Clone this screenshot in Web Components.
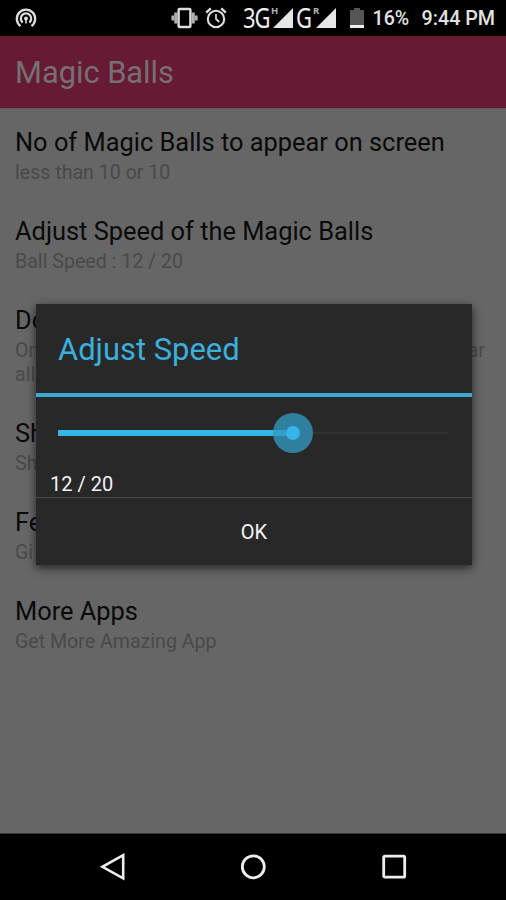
<!DOCTYPE html>
<html lang="en">
<head>
<meta charset="utf-8">
<title>Magic Balls</title>
<style>
  html, body { margin: 0; height: 100%; background: #000; }
  body { font-family: Roboto, "Liberation Sans", sans-serif; overflow: hidden; }
</style>
</head>
<body>
<phone-screen></phone-screen>
<script>
function define(name, html) {
  const tpl = document.createElement('template');
  tpl.innerHTML = html;
  customElements.define(name, class extends HTMLElement {
    constructor() {
      super();
      this.attachShadow({ mode: 'open' }).append(tpl.content.cloneNode(true));
    }
  });
}

define('status-bar', `
<style>
  :host { display: flex; height: 36px; background: #000; color: #e2e2e2; align-items: center; box-sizing: border-box; padding: 0 11px 0 15px; white-space: nowrap; }
  svg { display: block; flex: none; }
  .hotspot { margin-right: auto; }
  .sig { display: flex; align-items: center; }
  .net { font: 400 26.5px/36px "Noto Sans", sans-serif; letter-spacing: -1.2px; height: 36px; color: #eee; transform: scaleX(.83); transform-origin: 0 50%; }
  .sup { font: 700 9.5px/10px "Noto Sans", sans-serif; height: 10px; align-self: flex-start; margin-top: 6px; width: 8px; color: #b4b4b4; }
  .time { font-size: 20px; line-height: 36px; font-weight: 500; padding-top: 2px; }
</style>
<svg class="hotspot" width="22" height="22" viewBox="0 0 22 22" fill="none" stroke="#ddd" stroke-width="2.3">
  <path d="M5.5 19.2A9.2 9.2 0 1 1 16.5 19.2"/>
  <path d="M7.6 15.6A5.2 5.2 0 1 1 14.4 15.6"/>
  <circle cx="11" cy="11.6" r="2" fill="#ddd" stroke="none"/>
  <path d="M11 12V16.5" stroke-width="1.6"/>
</svg>
<svg width="27" height="22" viewBox="0 0 27 22" fill="none" stroke="#ddd" style="margin-right:7px">
  <rect x="7.6" y="2" width="11.8" height="18" rx="1" stroke-width="2.4"/>
  <path d="M4.9 5.5V16.5M22.1 5.5V16.5" stroke-width="3.4" stroke="#b0b0b0"/>
  <path d="M1.8 8.5V13.5M25.2 8.5V13.5" stroke-width="2.8" stroke="#b0b0b0"/>
</svg>
<svg width="22" height="22" viewBox="0 0 22 22" fill="none" stroke="#ddd" style="margin-right:16px">
  <circle cx="11" cy="12" r="8.2" stroke-width="2.1"/>
  <path d="M11 7V12L14.3 15" stroke-width="1.7"/>
  <path d="M1.2 5.6L5.8 1.4M20.8 5.6L16.2 1.4" stroke-width="2.5"/>
</svg>
<div class="sig">
  <span class="net" style="width:28px">3G</span><span class="sup">H</span>
  <svg width="20" height="20" viewBox="0 0 20 20" style="margin-left:-6px;margin-right:3px"><path d="M20 0V20H0Z" fill="#e6e6e6"/></svg>
  <span class="net" style="width:17px">G</span><span class="sup">R</span>
  <svg width="20" height="20" viewBox="0 0 20 20" style="margin-left:-5px;margin-right:14px"><path d="M20 0V20H0Z" fill="#e6e6e6"/></svg>
</div>
<svg width="14" height="21" viewBox="0 0 14 21" style="margin-right:8.5px"><path d="M0 2H4V0H10V2H14V17H0Z" fill="#555"/><path d="M0 17H14V20H0Z" fill="#eee"/></svg>
<span class="time" style="width:49px;font-size:19.5px">16%</span>
<span class="time" style="font-size:19.7px">9:44 PM</span>
`);

define('title-bar', `
<style>
  :host { display: flex; align-items: center; height: 73px; box-sizing: border-box; padding: 1px 15px 0; background: #661a33; color: #767074; border-bottom: 1px solid #6c595f; font-size: 30.8px; }
</style><slot></slot>`);

define('pref-item', `
<style>
  :host { display: block; box-sizing: border-box; padding: 17.8px 15px 13.9px; }
  .t { font-size: 25.4px; line-height: 30px; color: #0a0a0a; white-space: nowrap; }
  .s { font-size: 19.6px; line-height: 23.5px; color: #494949; padding-top: 4px; white-space: nowrap; }
</style>
<div class="t"><slot name="title"></slot></div>
<div class="s"><slot></slot></div>`);

define('speed-slider', `
<style>
  :host { display: grid; grid-template-columns: 235px 155px; align-items: center; height: 40px; padding-left: 22px; }
  .on { grid-area: 1 / 1; height: 6px; background: #34b5e5; }
  .off { grid-area: 1 / 2; height: 2px; background: #303030; }
  .knob { grid-area: 1 / 1; justify-self: end; margin-right: -20px; width: 40px; height: 40px; border-radius: 50%; background: #317f9e; display: grid; place-items: center; z-index: 1; }
  .knob::before { content: ""; grid-area: 1/1; justify-self: start; width: 20px; height: 6px; background: #329fc9; }
  .knob::after { content: ""; grid-area: 1/1; width: 14px; height: 14px; border-radius: 50%; background: #35b5e7; }
</style>
<div class="on"></div><div class="off"></div><div class="knob"></div>`);

define('alert-dialog', `
<style>
  :host { display: flex; flex-direction: column; width: 436px; height: 261px; background: #282828; box-shadow: 0 3px 9px rgba(0,0,0,.65); }
  .head { height: 89px; box-sizing: border-box; padding: 2px 22px 0; display: flex; align-items: center; font-size: 30.9px; color: #3bafdd; }
  .rule { height: 4px; background: #3aa9d6; margin-bottom: 16px; }
  .value { font-size: 20px; line-height: 24px; color: #f2f2f2; padding: 19px 14px 0; height: 25px; white-space: nowrap; }
  .ok { flex: 1; border-top: 1px solid #4a4a4a; display: flex; align-items: center; justify-content: center; color: #f4f4f4; font-size: 20px; padding-top: 1px; }
</style>
<div class="head"><slot name="title"></slot></div>
<div class="rule"></div>
<speed-slider></speed-slider>
<div class="value"><slot></slot></div>
<div class="ok"><slot name="action"></slot></div>`);

define('nav-bar', `
<style>
  :host { display: grid; grid-template-columns: repeat(3, 140.5px); justify-content: center; place-items: center; height: 66px; background: #000; }
  svg { fill: none; stroke: #eee; stroke-width: 2.8; }
</style>
<svg width="28" height="28" viewBox="0 0 28 28"><path d="M24.2 2.2V25.4L3.4 13.8Z" stroke-width="2.6"/></svg>
<svg width="28" height="28" viewBox="0 0 28 28"><circle cx="14.3" cy="13.8" r="11"/></svg>
<svg width="28" height="28" viewBox="0 0 28 28"><rect x="3.7" y="3.2" width="21" height="21" rx="1.2"/></svg>`);

define('phone-screen', `
<style>
  :host { display: flex; flex-direction: column; width: 506px; height: 900px; position: relative; background: #000; }
  main { flex: 1; background: #666; box-sizing: border-box; overflow: hidden; border-bottom: 1px solid #3a3a3a; }
  alert-dialog { position: absolute; left: 36px; top: 304px; }
  .split { display: flex; justify-content: space-between; margin-right: 6px; }
</style>
<status-bar></status-bar>
<title-bar>Magic Balls</title-bar>
<main>
  <pref-item><span slot="title">No of Magic Balls to appear on screen</span>less than 10 or 10</pref-item>
  <pref-item><span slot="title">Adjust Speed of the Magic Balls</span>Ball Speed : 12 / 20</pref-item>
  <pref-item><span slot="title">Do</span><div class="split"><span>On</span><span>ar</span></div><div>all</div></pref-item>
  <pref-item><span slot="title">Sh</span>Sh</pref-item>
  <pref-item><span slot="title">Fe</span>Gi</pref-item>
  <pref-item><span slot="title">More Apps</span>Get More Amazing App</pref-item>
</main>
<nav-bar></nav-bar>
<alert-dialog><span slot="title">Adjust Speed</span>12 / 20<span slot="action">OK</span></alert-dialog>`);
</script>
</body>
</html>
